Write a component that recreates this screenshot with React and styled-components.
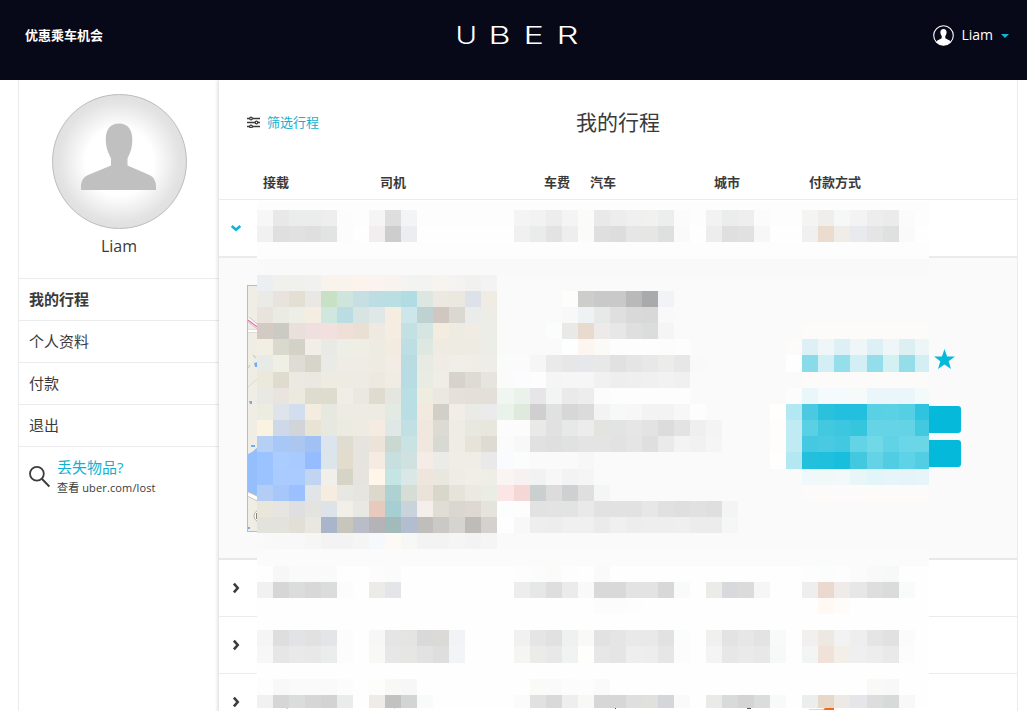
import React from 'react';
import styled, { createGlobalStyle } from 'styled-components';

const GlobalStyle = createGlobalStyle`
  *, *::before, *::after { box-sizing: border-box; }
  html, body { margin: 0; height: 711px; overflow: hidden; background: #fff; }
  body { font-family: "Open Sans", "Noto Sans CJK SC", sans-serif; color: #3a3a3a; }
`;

const Page = styled.div`
  display: flex;
  flex-direction: column;
  height: 711px;
  overflow: hidden;
`;

const Header = styled.header`
  display: grid;
  grid-template-columns: 1fr 132px 1fr;
  flex: none;
  height: 80px;
  padding: 0 18px 8px 25px;
  align-items: center;
  background: #070818;
  color: #fff;
`;

const PromoLink = styled.a`
  padding-bottom: 2px;
  font-size: 13px;
  line-height: 20px;
  font-weight: 700;
`;

const Wordmark = styled.svg`
  display: block;
  font-family: Inter, sans-serif;
  font-weight: 300;
  font-size: 23.5px;
  fill: #fff;
`;

const Account = styled.div`
  display: flex;
  justify-content: flex-end;
  align-items: center;
  padding-bottom: 1px;
  font-size: 14px;
  line-height: 20px;
`;

const AccountName = styled.span`
  margin: -1px 8px 0 7px;
`;

const Caret = styled.span`
  border: 4px solid transparent;
  border-top-color: #10b7d5;
  border-bottom: 0;
`;

const Body = styled.div`
  display: flex;
  flex: 1;
  width: 1000px;
  margin-left: 18px;
  border: solid #ebebeb;
  border-width: 0 1px;
`;

const Sidebar = styled.aside`
  width: 200px;
  flex: none;
`;

const Profile = styled.div`
  display: flex;
  flex-direction: column;
  align-items: center;
  height: 198px;
  padding-top: 14px;
  font-size: 16px;
  line-height: 34px;
`;

const Avatar = styled.div`
  display: flex;
  justify-content: center;
  width: 135px;
  height: 135px;
  padding-top: 28px;
  border: 1px solid #bdbdbd;
  border-radius: 50%;
  background: radial-gradient(circle, #fff 0 36%, #e3e3e3 64%, #e0e0e0 71%);
`;

const MenuItem = styled.a`
  display: flex;
  align-items: center;
  height: 42px;
  padding: 0 0 2px 10px;
  border-top: 1px solid #ebebeb;
  font-size: 15px;
  font-weight: ${(p) => (p.$active ? 700 : 400)};
`;

const LostItem = styled.div`
  display: flex;
  gap: 7px;
  padding: 9px 0 0 10px;
  border-top: 1px solid #ebebeb;

  svg { margin-top: 10px; flex: none; }
`;

const LostTitle = styled.div`
  color: #12b1d1;
  font-size: 15px;
  line-height: 23px;
`;

const LostHint = styled.div`
  font-size: 11px;
  line-height: 18px;
  letter-spacing: 0.13px;
`;

const Main = styled.main`
  position: relative;
  flex: 1;
  min-width: 0;
  background: #fff;
  box-shadow: -1px 0 4px rgba(0, 0, 0, 0.16);
  clip-path: inset(0 0 0 -6px);
`;

const Toolbar = styled.div`
  display: grid;
  grid-template-columns: 1fr auto 1fr;
  align-items: center;
  height: 85px;
  padding: 0 28px 2px;
`;

const FilterLink = styled.a`
  display: flex;
  align-items: center;
  gap: 7px;
  color: #12b1d1;
  font-size: 13px;
`;

const Title = styled.h1`
  margin: 0;
  font-size: 21px;
  line-height: 30px;
  font-weight: 400;
`;

const columns = '44px 117px 164px 46px 124px 95px 1fr';

const ColumnHeads = styled.div`
  display: grid;
  grid-template-columns: ${columns};
  align-items: center;
  height: 35px;
  padding-bottom: 2px;
  border-bottom: 1px solid #ebebeb;
  font-size: 13px;
  font-weight: 700;
`;

const TripRow = styled.div`
  display: flex;
  align-items: center;
  height: 57px;
  padding-left: 11px;
  border-bottom: 1px solid #ebebeb;
`;

const Detail = styled.section`
  display: flex;
  justify-content: space-between;
  height: 303px;
  padding: 27px 56px 0 28px;
  border-top: 1px solid #ebebeb;
  border-bottom: 2px solid #e8e8e8;
  background: #fafafa;
`;

const MapFrame = styled.div`
  width: 250px;
  height: 247px;
  border: 1px solid #bcbcbc;
  background: #f0eee4;
  overflow: hidden;
`;

const Actions = styled.div`
  display: flex;
  flex-direction: column;
  align-items: flex-end;
  width: 175px;
  padding-top: 64px;

  svg { margin: 0 6px 36px 0; }
`;

const ActionButton = styled.button`
  display: block;
  width: 100%;
  height: 27px;
  margin: 0 0 7px;
  border: 0;
  border-radius: 3px;
  background: #04b9da;
`;

const Mosaic = styled.div`
  position: absolute;
  left: 38px;
  top: 121px;
  display: grid;
  grid-template-columns: repeat(15, 16px) 17px repeat(21, 16px) 17px repeat(3, 16px) 14px;
  grid-template-rows:
    9px 16px 16px 17px 16px 16px 16px 16px 16px 16px 17px 16px 16px 16px 16px 16px
    17px 16px 16px 16px 16px 16px 17px 16px 16px 16px 16px 16px 17px 16px 16px 13px;
`;

const Remnants = styled.svg`
  position: absolute;
  left: 38px;
  top: 628px;
`;

// Each line is one band of tiles: the base tone, then runs as "column: tones".
const bands = [
  'fdfdfd',
  'fdfdfd|0:f7f7f7 e8e8e8 eaedec e9edeb eeeeee fcfcfc|7:f5f5f5 dedede f2f5f5|16:f4f4f4 f2f2f2 ededed f4f4f4 fbfbf9 e9e9e9 ededed f0f0f0 f1f1ef eaeeec fbfbfb|28:f2f2f2 eaedec eeeeee fbfbfb|34:f4f4f2 f0eeeb f6f8f7 f3f3f3 ededed ebebeb fbfbfb',
  'fefefe|0:f1f1f1 dfdfdf e1e1e1 dfdfdf e1e4e3 fcfcfc|7:f2eeef cdcdcd ecedf1|16:f0f0f0 e9eceb e3e3e3 eeeeee fbfbf9 dfdfdf dddddd e6e6e6 e6e6e3 dde0df fafafa|28:ededed dfdfdf e1e1e1 f7f7f7|34:f0f0f0 ebdccf f0ece8 e9eaed e5e5e5 dee1e0 fafafa',
  'fdfdfd',
  'f9f9f9',
  'fafafa|0:ebeff2 f0f1ed f0f1ed f1f1ef f9f3ee f9f3ee fcf3ed fbf3ef f8f3ef f3f3f1 f3f3f1 f7f3ef f5f3f1 f1f1f0 f3f3f3',
  'fafafa|0:eaebe7 e8e3dc e3dfd3 eae8e4 c8e1c5 cee4dd c5dfe2 bcdde1 b9dfe2 b2dce3 dde7e1 ece9e2 ebe8e0 dde1e8 f0ece4|19:fdfdfb cdcecb c9c9c9 c9c9c9 b9b9b9 a9aaac f2f3f7',
  'fafafa|0:e8e4dd eaece4 edefe7 f6ede2 cfe7df b9dde1 d7e4e1 dfe8e6 f6ede1 cde6e9 bed3d1 cfc7c0 dad8d1 eaece9 edede8|19:f8f8f8 eff2f5 e6e9e8 dfdfdf d9d9d9 d8d8d8 f9f9f9',
  'fafafa|0:d3cbc3 cccac4 e9dfdb efdfdf f2e0df efdfd6 e9dfd3 eee9e1 f5ede2 c3e1e2 d5e6e2 f5ece0 eeebe3 f0ebe3 edede7|18:fbfdfc e9e9e7 e8dacd eeeae9 e7e7e7 dfdfdf dadddb f5f5f5|34:fdfbf9 fdfbf9 fdfbf9 fdfbf9 fdfbf9 fdfbf9 fdfbf9 fdfbf9',
  'fafafa|0:f2eee3 dad9ce d4d2c7 f2eee7 e9eae5 edeee6 eeeee5 edebe2 f4ebe0 bddfe3 dde8e1 efebe3 eeebe3 eeebe3 edede7|19:fdfffe fdf5ef fcfaf7 fdfdfd fdfdfd fdfdfd fcfcfc fdfdfd|33:fdfbf9 dcf0f5 eef6f8 dcf0f5 eef6f8 dcf1f5 eef6f8 dcf0f4 ecf6f7',
  'fafafa|0:e8eae5 f0efe5 dedcd4 d7d5c9 eaebe7 eeece5 eeece5 eeebe3 f2ece4 b8dce2 e8ebe4 f0ebe4 efeee8 efede5 efede7 f9fcfb fbfbfb f6f6f6 eaeaea e7e7e7 e7e8eb e8e8e8 e1e1e1 e5e5e5 e8e8e8 ececea e7e7e7 f9f9f9|33:fefefe 8adbe9 d3eff5 95deeb d3eff5 93deea d3f0f2 94dde9 d3eff4',
  'fafafa|0:ebe9dc dfdccf ece9e3 eae8e1 eeebe3 eeebe3 eeebe3 ede9e1 f0ebe3 b8dce3 e9ece3 f0ede5 d8d2cc dedbd4 e5e4df fbfbfb fcfcfe fdfdfd f5f5f5 f6f6f6 f6f6f6 f1f1f1 eeeeee eeefee f0f0f0 f2f2f2 f0f0f0|34:fdfbfa fdfbfa fdfbfa fdfbfa fdfbfa fdfbfa fdfbfa fdfafa',
  'fafafa|0:e8e9e4 e9e4dd ece9de dedbcf dedbcf efede5 eae8e0 dfdccf e6e6e0 b9dee4 eeede0 ebe8e1 e5e0d9 e4dfd9 e4dfd9 f0f6f2 ebf2eb e6e6e9 f2f5f4 eaeaea ededed fcfcfc fdfdfd fdfdfd fdfdfd fdfdfd fdfdfd|33:fcfcfc eaf7fa f5fbfc f5fbfc f6fbfa eaf6f9 eaf6f9 eaf6f9 f3fbfa',
  'fafafa|0:edece1 dfe4eb d2def0 f3ecdf e7e9e0 eeebe2 eeebe2 eeebe2 e2eae3 b9dfe4 f2e9df d1cfc8 f2ede6 eaebe7 ebebed e9f3e9 dfeadc d1ced1 dfe2e1 d7d7d7 dbdbdb f3f3f3 f7f9f8 f7f7f7 f3f3f3 f3f3f3 f7f7f7 fdfdfd|32:fffefd b3e7f1 4ac9e1 2bc1dc 22c0de 22c0de 5ad0e5 5bd1e6 55cfe4 2ec3de',
  'fafafa|0:fbf3e1 cdd9e8 d1d5d9 e7e4d4 e7e8df ebebe1 eeebe3 f5ebe1 dfe8e6 c1e0e4 f0e7df dcdad3 efece5 e8e8e0 e8e7de fcfcfc fcfcfc e9e9e7 e0e1e0 e6e9e8 ececec e3e3e0 e1e4e3 e6e6e6 e3e3e3 dcdcdc e3e3e3 efefef f4f4f4|32:fffdfc c0ebf2 5ad0e4 42c8df 3cc6df 35c5dc 66d4e7 66d4e6 64d3e6 42c8df',
  'fafafa|0:b6cff4 a7c7f7 abc7f0 a1c0f4 dce4ed e0dccf e5e4de ece3d9 c9d8d0 c9e3e4 f0e7df d8d9d2 eeece5 e7e3d9 dedbd2 fbfbfb f8f8f8 e1e1e1 dfdfdf dfe2e1 e4e4e4 e4e4e4 e2e2e2 e5e5e5 dfdfdf eaeaea f3f3f3 f1f1f1 f5f5f5|32:fffdfc c0ebf2 45c8e1 49cae2 42c9e1 62d4e6 71d8e8 62d3e6 6bd6e7 6bd6e6',
  'fafafa|0:9bc3ff aaccff a9caff 95bcff dce4ec e2dccd e5e4df f5ebe3 c8dfdf cfe2df f5ece8 ebebe8 efede5 efede5 e8e9e8 f9fbff fafdfc|20:f7f7f7|32:fffefd b3e7f1 22c0dd 1fc0de 18bedb 42c9df 64d3e6 50cde3 5ed2e6 51cde4',
  'fafafa|0:9bc3ff a9cbff a9cbff c1d4f2 f0efea d6d3c7 e5e4de fff6e9 c5e4e4 d9e7e6 eee5dd eae7df eeece5 f0eee7 eeeee7 faf5f3 f7f2f1 f0f3f2 f7f7f7 f3f3f3 f5f5f5|34:eff8fa f0f9f8 f3f9fa e9f6f7 e2f5f9 e6f5fa e5f4f9 e5f5f9',
  'fafafa|0:b4cdf5 a7c7fb 9bc0ff e2e5e7 f6ede0 e8e8e3 e6e5df ddd8cc b0d1d1 d6ddd4 ebe2d9 d9d6ca e6e3db ebe9e1 eaede6 fce6e5 f5d8d5 cacfd0 dcdcdc cfd0d1 dfdfdf f4f6f5|34:fcfbfa fcfbfa fcfafb fdfafa fdfafa fdfafa fdfafa fdfafa',
  'fafafa|0:eae7da e6e5e1 dfdfe1 e3e4e0 dde3e9 f2efe9 e8e9e3 e8cabd a6cfd4 c8d3db f4efea e0ddd5 dbd6d0 ddd9d2 e4e3dc fbfdfe fdfdfd e2e2e2 e3e3e3 e1e4e2 e9e9e9 e2e2e2 e2e2e2 e2e2e2 e7e7e7 e1e1e1 dfdfdf e1e1e1 dfdfdf f4f4f4',
  'fafafa|0:e3e3de e3e2dc e2dfd7 e8e7e0 a8b5cb c8c5bd b9bdc7 b5b2b8 a2bbba b2bdcf bfbebd cac9c5 d5d4d0 bfbcb7 d3d2ce fefefe f8f8f8 eeeeee ededed f0f0f0 f0f0f0 ebebeb f0f0f0 ededed eeeeee eeeeee efefef ececec ececec f5f7f6',
  'fafafa|0:f9f9f9 f8f8f8 f8f8f8 f6f6f4 f3f3f3 f3f3f3 f5f5f3 f5f9fb fdf9f5 f7f7f5 f3f3f3 f3f3f3 f5f5f5 f3f3f3 f5f5f5',
  'fbfbfb',
  'fefefe|1:f7f7f7 fafafa fafafa fafafa|7:fcfcfc fbfbfb|16:fdfdfd fcfcfc fbfbfa fdfdfd fefefe fafafa|34:fdfdfd fbfdfc fdfdfd fbfbfb f8f9f8 f7f9f8',
  'fefefe|0:f1f1f1 d6d6d6 dbdddc d8d8d8 dbdddc fcfcfc|7:ecebe8 e4e5e8|16:ededed e5e8e7 dedede ebebeb f9f9f9 d9d9d9 d9d9d9 e3e3e3 e3e3e3 d8d8d8 f8fbfa|28:ebebe8 d8d9dd dbdbdb f6f6f6|34:eeeeee ebd9cf f0ebe8 e7e7e7 dedede d9dcdb f8fbfa',
  'fefefe|21:fcfcfc fcfcfc fdfdfd|35:fff8f3 fefcf9',
  'fefefe',
  'fefefe|0:f5f5f5 dedede e1e3e6 e1e1e1 e3e5e8 fcfcfc|7:f7f7f7 e5e5e5 e4e4e2 d9d9d9 dbdad7 f1f3f6|16:f1f1f1 e5e5e5 e1e1e1 eef1f0 f9f9f7 e2e2e2 e5e5e5 e9e9e9 e9e9e9 e2e2e2 fafdfc|28:f0f0ee e3e3e3 e7e7e7 e3e3e3 f7faf9|34:f1f0ee ede8e1 f2f2f2 eeeeee e5e5e5 e1e1e1 fbfbfb',
  'fefefe|0:f7f7f7 e6e6e6 e9e9e9 e8e8e8 eaedec fcfcfc|7:f8f8f6 e7e7e7 e6e6e3 e2e2e2 dedede f3f4f7|16:f5f5f3 ebebe9 e8e8e8 f0f3f2 fefefb e7e7e7 e5e5e5 eeeeee ededed e6e6e6 fcfcfc|28:f4f4f4 e7e7e7 eaeaea e8e8e8 f7f9f8|34:f3f5f4 f0e2d8 f3eee8 efefef ededed e9e9e9 fcfcfc',
  'fefefe',
  'fefefe|0:fdfdfd f8f8f8 fafafa fafafa fafafa fcfcfc|7:fdfdfb f8f8f6 f7f7f7|17:fafaf9 fafafa fcfcfc fdfdfd fafafa|38:f9f9f7 f8f8f8',
  'fefefe|0:f1f1f1 d6d6d6 dbdddc d6d6d6 d3d3d3 e9eceb|7:eeebe9 c2c2c2 d2d5d4 f8fbfa|16:fbfbfb e1e1e1 d9d9d9 eeeeee f8f8f6 d7d7d7 d7d7d7 dfdfdf e0e0dd d5d6da fafafa|28:eaeae8 d8dbda d4d4d4 dadddc f7faf9|34:ebeeed e7d9ca efe9e6 e5e6ea dddddd d6dad8 f8f8f8',
];

const tiles = bands.flatMap((band) => {
  const [base, ...runs] = band.split('|');
  const row = Array(42).fill(base);
  runs.forEach((run) => {
    const [start, tones] = run.split(':');
    tones.split(' ').forEach((tone, i) => { row[Number(start) + i] = tone; });
  });
  return row;
});

const letters = [
  ['U', 4.5, 21.5], ['B', 37.5, 22], ['E', 72.5, 20.5], ['R', 105.5, 22],
];

const Chevron = ({ open }) => (
  <svg width="12" height="12" viewBox="0 0 12 12" fill="none" strokeWidth="2.6"
    stroke={open ? '#10b5d4' : '#3c3c3e'}>
    <path d={open ? 'M1.7 4 L6 7.8 L10.3 4' : 'M3.9 1.7 L7.7 6 L3.9 10.3'} />
  </svg>
);

export default function App() {
  return (
    <Page>
      <GlobalStyle />
      <Header>
        <PromoLink>优惠乘车机会</PromoLink>
        <Wordmark width="132" height="40" viewBox="0 0 132 40" aria-label="UBER">
          {letters.map(([letter, x, w]) => (
            <text key={letter} x={x} y="28" textLength={w} lengthAdjust="spacingAndGlyphs">{letter}</text>
          ))}
        </Wordmark>
        <Account>
          <svg width="21" height="21" viewBox="0 0 21 21">
            <circle cx="10.5" cy="10.5" r="9.8" fill="none" stroke="#fff" strokeWidth="1.1" />
            <path fill="#fff" d="M10.5 4 C8.3 4 7.3 5.4 7.4 7.5 C7.5 9 8 10 8.7 10.9 V13.3 L4.4 15.4 C3.9 15.7 3.6 16.2 3.4 17 A9.6 9.6 0 0 0 17.6 17 C17.4 16.2 17.1 15.7 16.6 15.4 L12.3 13.3 V10.9 C13 10 13.5 9 13.6 7.5 C13.7 5.4 12.7 4 10.5 4Z" />
          </svg>
          <AccountName>Liam</AccountName>
          <Caret />
        </Account>
      </Header>
      <Body>
        <Sidebar>
          <Profile>
            <Avatar>
              <svg width="76" height="68" viewBox="0 0 76 68">
                <path fill="#c0c0c0" d="M38 .5 C29 .5 24.5 7 24.8 17 C25 26 27.5 30 30 35.5 V42.5 L7 52 C2 54 0 59 0 63 V67 H75 V63 C75 59 73 54 68.5 52 L46.5 42.5 V35.5 C49 30 51.2 26 51.3 17 C51.5 7 47 .5 38 .5Z" />
              </svg>
            </Avatar>
            <span>Liam</span>
          </Profile>
          <MenuItem $active>我的行程</MenuItem>
          <MenuItem>个人资料</MenuItem>
          <MenuItem>付款</MenuItem>
          <MenuItem>退出</MenuItem>
          <LostItem>
            <svg width="21" height="22" viewBox="0 0 21 22" fill="none" stroke="#3c3c3e" strokeWidth="1.8">
              <circle cx="7.9" cy="7.8" r="6.9" />
              <path d="M12.8 12.7 L20.4 20.5" strokeWidth="2" />
            </svg>
            <div>
              <LostTitle>丢失物品?</LostTitle>
              <LostHint>查看 uber.com/lost</LostHint>
            </div>
          </LostItem>
        </Sidebar>
        <Main>
          <Toolbar>
            <FilterLink>
              <svg width="13" height="12" viewBox="0 0 13 12" stroke="#3c3c3e" strokeWidth="1.3" fill="#fff">
                <path d="M0 2.5 H13 M0 6.5 H13 M0 10.500 H13" />
                <circle cx="4" cy="2.500" r="1.300" />
                <circle cx="9.500" cy="6.500" r="1.300" />
                <circle cx="4" cy="10.500" r="1.300" />
              </svg>
              筛选行程
            </FilterLink>
            <Title>我的行程</Title>
          </Toolbar>
          <ColumnHeads>
            <span />
            <span>接载</span>
            <span>司机</span>
            <span>车费</span>
            <span>汽车</span>
            <span>城市</span>
            <span>付款方式</span>
          </ColumnHeads>
          <TripRow><Chevron open /></TripRow>
          <Detail>
            <MapFrame>
              <svg width="248" height="245" viewBox="0 0 248 245" fill="none">
                <path d="M0 33 L16 46" stroke="#cfcac0" strokeWidth="5" />
                <path d="M0 33 L16 46" stroke="#fff" strokeWidth="3" />
                <path d="M0 34 L16 46" stroke="#e86cae" strokeWidth="1.2" />
                <path d="M0 45 H20" stroke="#d8d3c8" strokeWidth="4" />
                <path d="M0 45 H20" stroke="#fff" strokeWidth="2.5" />
                <path d="M0 82 L2 79 M5 69 L8 72" stroke="#c5dcb8" strokeWidth="1.5" />
                <path d="M0 101 L10 92" stroke="#dcd9d0" />
                <path d="M6 77 L10 76 V81 H7Z M1 115 H4 V118 H2Z M3 159 H7 V161 H3Z" fill="#76aaf8" />
                <path d="M0 168 L4 166 L10 161 V210 L0 206Z" fill="#94befc" />
                <path d="M0 208 L12 214" stroke="#bcb8b0" strokeWidth="5" />
                <path d="M0 208 L12 214" stroke="#fff" strokeWidth="3.5" />
                <circle cx="12" cy="230" r="6" fill="#fff" stroke="#b5b1a8" />
                <path d="M8.5 227 V233" stroke="#88857e" />
                <path d="M0 242 H2" stroke="#76aaf8" strokeWidth="2" />
              </svg>
            </MapFrame>
            <Actions>
              <svg width="21" height="21" viewBox="0 0 21 21">
                <path fill="#04b9da" d="M10.5 0 L13.1 7.4 L21 7.6 L14.7 12.3 L17 20 L10.5 15.5 L4 20 L6.3 12.3 L0 7.6 L7.9 7.4Z" />
              </svg>
              <ActionButton />
              <ActionButton />
            </Actions>
          </Detail>
          <TripRow><Chevron /></TripRow>
          <TripRow><Chevron /></TripRow>
          <TripRow><Chevron /></TripRow>
          <Mosaic>
            {tiles.map((tone, i) => <span key={i} style={{ background: `#${tone}` }} />)}
          </Mosaic>
          <Remnants width="672" height="3" viewBox="0 0 672 3">
            <path fill="#555" d="M358 0h1v1h-1z M490 0h4v1h-4z" />
            <path fill="#d8d8d8" d="M552 1h14v1h-14z M29 0h2v1h-2z M137 0h1v1h-1z" />
            <path fill="#fa6412" d="M568 0h9v2h-11z" />
          </Remnants>
        </Main>
      </Body>
    </Page>
  );
}
